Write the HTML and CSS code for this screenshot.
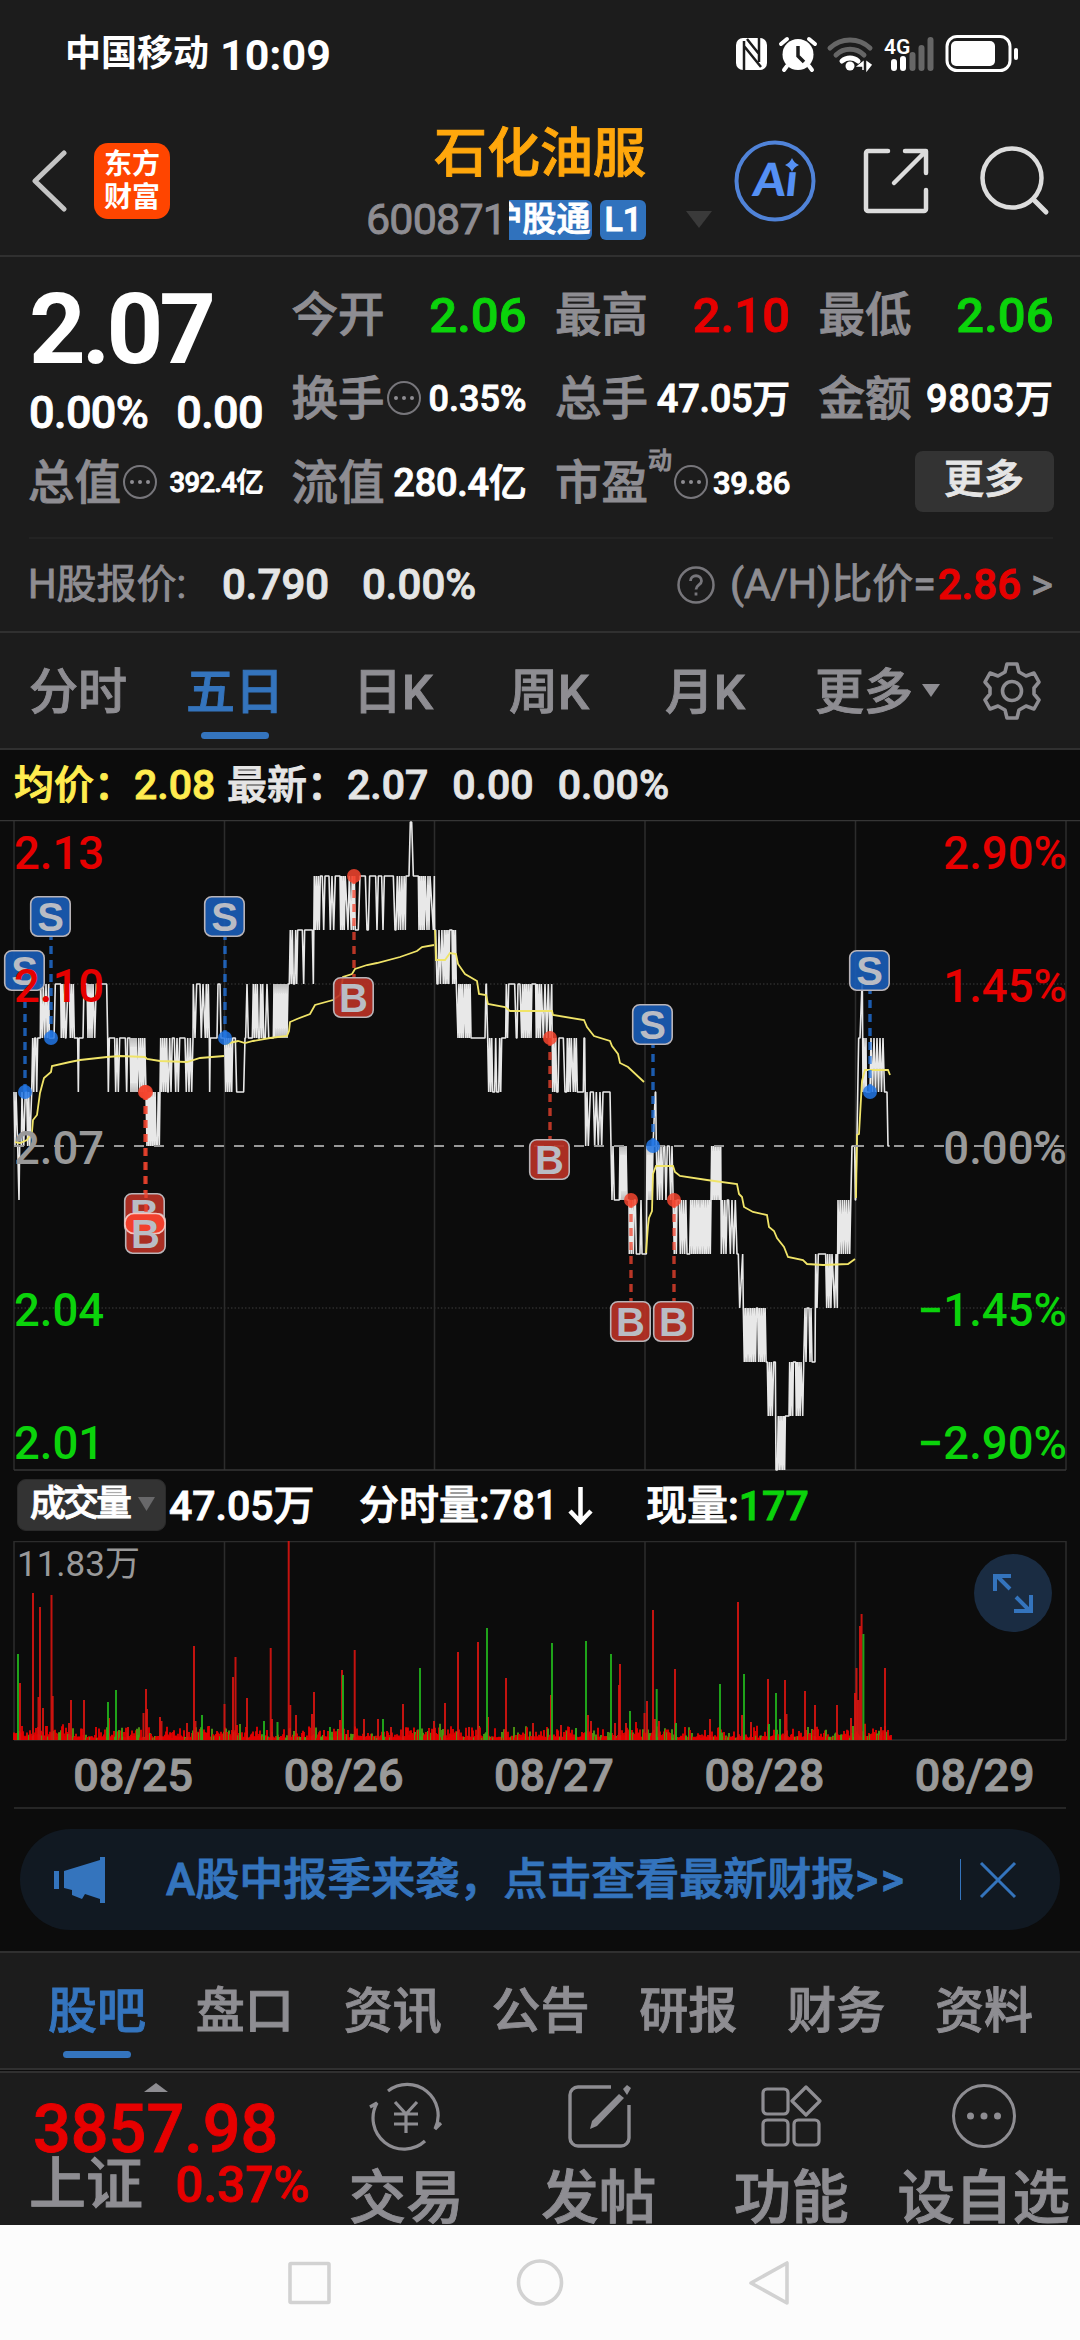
FILE: index.html
```html
<!DOCTYPE html>
<html lang="zh-CN">
<head>
  <meta charset="UTF-8">
  <meta name="viewport" content="width=device-width, initial-scale=1.0">
  <title>石化油服 600871</title>
  <link rel="stylesheet" href="styles.css">
</head>
<body>
  <div class="status-bar">
    <span class="carrier">中国移动</span>
    <span class="clock">10:09</span>
    <svg class="status-icons" width="290" height="44" viewBox="0 0 290 44">
      <rect x="5" y="6" width="31" height="32" rx="7" fill="#fff"/>
      <path d="M13 38V9M13 14l17 21M16 7l12 15M28 5v25" fill="none" stroke="#1c1c1c" stroke-width="2.500"/>
      <circle cx="67" cy="22.500" r="15.500" fill="#fff"/>
      <path d="M50 12l6-5M84 12l-6-5M56 34l-3 4M78 34l3 4" stroke="#fff" stroke-width="4" stroke-linecap="round"/>
      <path d="M67 14v10l6 6" fill="none" stroke="#1c1c1c" stroke-width="3.500"/>
      <path d="M99 16a29 29 0 0 1 40 0" fill="none" stroke="#666" stroke-width="5" stroke-linecap="round"/>
      <path d="M105 23a20 20 0 0 1 28 0" fill="none" stroke="#666" stroke-width="5" stroke-linecap="round"/>
      <path d="M111 29a12 12 0 0 1 16 0" fill="none" stroke="#fff" stroke-width="5" stroke-linecap="round"/>
      <circle cx="119" cy="34" r="4.500" fill="#fff"/>
      <path d="M127 34h5v-4zM132 30v8M136 30v8l4-5z" fill="#fff" stroke="#fff" stroke-width="1.500"/>
      <text class="net-type" x="153" y="22">4G</text>
      <path d="M163 30v6M172 27v9" stroke="#fff" stroke-width="6" stroke-linecap="round"/>
      <path d="M181.500 23v13M190.500 16v20M199.500 8v28" stroke="#666" stroke-width="6" stroke-linecap="round"/>
      <rect x="216" y="4.500" width="63" height="34" rx="10" fill="none" stroke="#fff" stroke-width="3"/>
      <rect x="220" y="9" width="44" height="25" rx="5" fill="#fff"/>
      <path d="M285 18v8" stroke="#fff" stroke-width="4" stroke-linecap="round"/>
    </svg>
  </div>

  <div class="header">
    <svg class="back" width="36" height="62" viewBox="0 0 36 62"><path d="M33 3L4 31l29 28" fill="none" stroke="#c4c4c4" stroke-width="5" stroke-linecap="round" stroke-linejoin="round"/></svg>
    <div class="logo">东方<br>财富</div>
    <div class="stock">
      <div class="stock-name">石化油服</div>
      <div class="stock-code">
        <span>600871</span><span class="tag tag-cut"><i>沪股通</i></span><span class="tag tag-l1">L1</span>
      </div>
    </div>
    <svg class="caret" width="26" height="18" viewBox="0 0 26 18"><path d="M0 0h26L13 17z" fill="#3a3a3a"/></svg>
    <svg class="ai" width="82" height="82" viewBox="0 0 82 82">
      <circle cx="41" cy="41" r="38.500" fill="none" stroke="#5083d8" stroke-width="4"/>
      <path d="M58 18q2 5 7 7-5 2-7 7-2-5-7-7 5-2 7-7z" fill="#5590f4"/>
      <text class="ai-text" x="18" y="56">Aı</text>
    </svg>
    <svg class="share" width="66" height="66" viewBox="0 0 66 66"><path d="M25 3H5a2 2 0 0 0-2 2v56a2 2 0 0 0 2 2h56a2 2 0 0 0 2-2V42M42 3h21v22M31 35L62 4" fill="none" stroke="#dcdcdc" stroke-width="4.500" stroke-linecap="round" stroke-linejoin="round"/></svg>
    <svg class="search" width="70" height="70" viewBox="0 0 70 70"><circle cx="32" cy="32" r="29.500" fill="none" stroke="#dcdcdc" stroke-width="4.500"/><path d="M54 54l12 12" stroke="#dcdcdc" stroke-width="5" stroke-linecap="round"/></svg>
  </div>

  <div class="quote">
    <div class="quote-grid">
      <div class="price">2.07</div>
      <div class="cell"><label>今开</label><b class="v-lg down">2.06</b></div>
      <div class="cell"><label>最高</label><b class="v-lg up">2.10</b></div>
      <div class="cell"><label>最低</label><b class="v-lg down">2.06</b></div>

      <div class="change"><span>0.00%</span><span>0.00</span></div>
      <div class="cell"><label>换手</label><i class="dots"></i><b class="v-sm">0.35%</b></div>
      <div class="cell"><label>总手</label><b class="v-md">47.05万</b></div>
      <div class="cell"><label>金额</label><b class="v-md v-amount">9803万</b></div>

      <div class="cell"><label>总值</label><i class="dots"></i><b class="v-xs">392.4亿</b></div>
      <div class="cell"><label>流值</label><b class="v-md">280.4亿</b></div>
      <div class="cell"><label>市盈</label><sup>动</sup><i class="dots"></i><b class="v-pe">39.86</b></div>
      <div class="cell"><button class="more">更多</button></div>
    </div>
    <div class="h-share">
      <span class="h-label">H股报价:</span>
      <span class="h-price">0.790</span>
      <span class="h-pct">0.00%</span>
      <svg class="help" width="40" height="40" viewBox="0 0 40 40"><circle cx="20" cy="20" r="17.500" fill="none" stroke="#77767b" stroke-width="2.500"/><path d="M14.500 16c0-7 11-7 11 0 0 4-5.500 4-5.500 8.500M20 27.500v3" fill="none" stroke="#77767b" stroke-width="2.800"/></svg>
      <span class="ah">(A/H)比价=</span><span class="ah-value up">2.86</span><span class="ah-arrow">&gt;</span>
    </div>
  </div>

  <div class="period-tabs">
    <span>分时</span>
    <span class="active">五日</span>
    <span>日K</span>
    <span>周K</span>
    <span>月K</span>
    <span class="period-more">更多<svg width="18" height="13" viewBox="0 0 18 13"><path d="M0 0h18L9 13z" fill="#8e8d92"/></svg></span>
    <svg class="gear" width="58" height="60" viewBox="0 0 58 60">
      <path d="M24 3h10l2 8 7 4 8-3 5 9-5 6v6l5 6-5 9-8-3-7 4-2 8H24l-2-8-7-4-8 3-5-9 5-6v-6l-5-6 5-9 8 3 7-4z" fill="none" stroke="#8e8d92" stroke-width="3.600" stroke-linejoin="round"/>
      <circle cx="29" cy="30" r="9.500" fill="none" stroke="#8e8d92" stroke-width="3.600"/>
    </svg>
  </div>

  <div class="avg-line">
    <span class="avg">均价：<b>2.08</b></span>
    <span class="last">最新：<b>2.07</b><b>0.00</b><b>0.00%</b></span>
  </div>

  <svg class="chart" width="1080" height="651" viewBox="0 820 1080 651">
    <g id="grid"></g>
    <g id="series"></g>
    <g id="marks"></g>
    <g class="axis">
      <text class="up" x="14" y="869">2.13</text>
      <text class="up" x="14" y="1002">2.10</text>
      <text class="flat" x="14" y="1164">2.07</text>
      <text class="down" x="14" y="1326">2.04</text>
      <text class="down" x="14" y="1459">2.01</text>
    </g>
    <g class="axis axis-right">
      <text class="up" x="1067" y="869">2.90%</text>
      <text class="up" x="1067" y="1002">1.45%</text>
      <text class="flat" x="1067" y="1164">0.00%</text>
      <text class="down" x="1067" y="1326">−1.45%</text>
      <text class="down" x="1067" y="1459">−2.90%</text>
    </g>
  </svg>

  <div class="vol-head">
    <button class="vol-type">成交量<svg width="17" height="14" viewBox="0 0 17 14"><path d="M0 0h17L8.500 14z" fill="#68686a"/></svg></button>
    <span class="vol-total">47.05万</span>
    <span class="vol-min">分时量:781<svg width="25" height="38" viewBox="0 0 25 38"><path d="M12.500 0v34M2 24l10.500 11L23 24" fill="none" stroke="#fff" stroke-width="4.500"/></svg></span>
    <span class="vol-now">现量:<em class="down">177</em></span>
  </div>

  <svg class="volume" width="1080" height="200" viewBox="0 1541 1080 200">
    <g id="bars"></g>
    <text class="vol-max" x="17" y="1576">11.83万</text>
    <circle cx="1013" cy="1593" r="39" fill="#1a2c42"/>
    <path d="M1010 1589l-13-13M995 1591v-15h16M1016 1597l13 13M1014 1611h17v-16" fill="none" stroke="#3474bd" stroke-width="4"/>
  </svg>

  <div class="dates">
    <span>08/25</span><span>08/26</span><span>08/27</span><span>08/28</span><span>08/29</span>
  </div>

  <div class="notice-wrap">
    <div class="notice">
      <svg width="52" height="46" viewBox="0 0 52 46"><path d="M0 14h5v18H0zM10 14L46 3V0h5v46h-5v-4L31 37l-3 5-10-4v-5l-8-2z" fill="#3474bd"/></svg>
      <span class="notice-text">A股中报季来袭，点击查看最新财报<em>&gt;&gt;</em></span>
      <span class="notice-line"></span>
      <svg class="close" width="38" height="38" viewBox="0 0 38 38"><path d="M2 2l34 34M36 2L2 36" stroke="#3474bd" stroke-width="3"/></svg>
    </div>
  </div>

  <div class="info-tabs">
    <span class="active">股吧</span>
    <span>盘口</span>
    <span>资讯</span>
    <span>公告</span>
    <span>研报</span>
    <span>财务</span>
    <span>资料</span>
  </div>

  <div class="toolbar">
    <div class="index">
      <svg class="index-caret" width="24" height="9" viewBox="0 0 24 9"><path d="M0 9h24L12 0z" fill="#8e8d92"/></svg>
      <div class="index-value">3857.98</div>
      <div class="index-row"><span>上证</span><em>0.37%</em></div>
    </div>
    <div class="tool">
      <svg width="74" height="70" viewBox="0 0 74 70"><path d="M19 10a31 31 0 0 1 47 38l6-6M56 60A31 31 0 0 1 8 22l-7 4M26 21l11 12 11-12M37 33v19M25 33h24M25 43h24" fill="none" stroke="#8e8d92" stroke-width="3.200" stroke-linejoin="bevel"/></svg>
      <span>交易</span>
    </div>
    <div class="tool">
      <svg width="66" height="66" viewBox="0 0 66 66"><path d="M45 4H12a8 8 0 0 0-8 8v43a8 8 0 0 0 8 8h43a8 8 0 0 0 8-8V22" fill="none" stroke="#8e8d92" stroke-width="3.400"/><path d="M57 6l4-4 4 3-4 7zM53 11l5 4-27 28-7 3 2-8z" fill="#8e8d92"/></svg>
      <span>发帖</span>
    </div>
    <div class="tool">
      <svg width="62" height="64" viewBox="0 0 62 64"><g fill="none" stroke="#8e8d92" stroke-width="3.200"><rect x="3" y="5" width="25" height="25" rx="4"/><rect x="3" y="36" width="25" height="25" rx="4"/><rect x="34" y="36" width="25" height="25" rx="4"/><path d="M46 3l14 14-14 14-14-14z" stroke-linejoin="round"/></g></svg>
      <span>功能</span>
    </div>
    <div class="tool">
      <svg width="66" height="66" viewBox="0 0 66 66"><circle cx="33" cy="33" r="30.500" fill="none" stroke="#8e8d92" stroke-width="3"/><g fill="#8e8d92"><circle cx="19.500" cy="33" r="3.500"/><circle cx="33" cy="33" r="3.500"/><circle cx="46.500" cy="33" r="3.500"/></g></svg>
      <span>设自选</span>
    </div>
  </div>

  <div class="nav-bar">
    <svg width="1080" height="116" viewBox="0 0 1080 116">
      <g fill="none" stroke="#d2d2d2" stroke-width="3.600" stroke-linejoin="round">
        <rect x="290" y="38.500" width="39" height="39" rx="1"/>
        <circle cx="540" cy="57.500" r="21.500"/>
        <path d="M787 38v40l-36-20z"/>
      </g>
    </svg>
  </div>

  <script src="chart.js"></script>
</body>
</html>
```
FILE: styles.css
```css
* {
  box-sizing: border-box;
}

body {
  margin: 0;
  width: 1080px;
  height: 2340px;
  overflow: hidden;
  background-color: #0c0c0c;
  color: #fff;
  font-family: Roboto, "Noto Sans CJK SC", sans-serif;
  font-weight: 500;
  line-height: 1;
  white-space: nowrap;
  -webkit-text-stroke: 0.9px;
}

i, em {
  font-style: normal;
}

svg {
  display: block;
  flex: none;
}

.up {
  color: #e60000;
  fill: #e60000;
}

.down {
  color: #0bd30b;
  fill: #0bd30b;
}

.flat {
  color: #999;
  fill: #999;
}

/* status bar */
.status-bar {
  display: flex;
  align-items: center;
  height: 108px;
  padding: 0 59px 0 65px;
  background-color: #1c1c1c;
  font-weight: 700;
  -webkit-text-stroke: 0;
}

.carrier {
  font-size: 36px;
}

.clock {
  margin: 2px 0 0 11px;
  font-size: 43px;
}

.status-icons {
  margin-left: auto;
}

.net-type {
  font-size: 21px;
  font-weight: 600;
  fill: #fff;
}

/* header */
.header {
  display: flex;
  height: 149px;
  padding-left: 31px;
  background-color: #1c1c1c;
  border-bottom: 2px solid #303030;
}

.back {
  margin-top: 42px;
}

.logo {
  width: 76px;
  height: 76px;
  margin: 35px 0 0 27px;
  padding: 5px 0;
  border-radius: 14px;
  background-color: #ff4500;
  text-align: center;
  font-size: 28px;
  font-weight: 700;
  line-height: 33px;
  -webkit-text-stroke: 0;
}

.stock {
  width: 280px;
  margin-left: 196px;
  text-align: right;
}

.stock-name {
  margin-top: 18px;
  font-size: 53px;
  line-height: 56px;
  color: #ffa70c;
}

.stock-code {
  display: flex;
  justify-content: flex-end;
  margin-top: 17px;
  font-size: 43px;
  line-height: 41px;
  font-weight: 400;
  color: #8e8d92;
  letter-spacing: -0.800px;
}

.tag {
  height: 40px;
  margin-top: 1px;
  border-radius: 6px;
  background-color: #3072bd;
  color: #fff;
  font-size: 34px;
  font-weight: 500;
  line-height: 38px;
  letter-spacing: 0;
}

.tag-cut {
  display: flex;
  justify-content: flex-end;
  width: 84px;
  margin-left: 3px;
  padding-right: 2px;
  border-radius: 0 6px 6px 0;
  overflow: hidden;
}

.tag-l1 {
  width: 46px;
  margin-left: 8px;
  text-align: center;
}

.caret {
  margin: 103px 0 0 40px;
}

.ai {
  margin: 32px 0 0 22px;
}

.ai-text {
  font-family: Lato, sans-serif;
  font-size: 46px;
  font-weight: 900;
  fill: #5590f4;
  color: #5590f4;
  -webkit-text-stroke: 1.500px;
  transform: skewX(-6deg);
  transform-origin: 41px 56px;
}

.share {
  margin: 40px 0 0 47px;
}

.search {
  margin: 38px 0 0 51px;
}

/* quote */
.quote {
  height: 376px;
  padding: 16px 27px 0 29px;
  background-color: #1c1c1c;
  border-bottom: 2px solid #303030;
}

.quote-grid {
  display: grid;
  grid-template-columns: repeat(4, 234px);
  grid-template-rows: repeat(3, 84px);
  column-gap: 29.500px;
}

.price {
  font-size: 99px;
  font-weight: 700;
  line-height: 113px;
  letter-spacing: -4px;
  -webkit-text-stroke: 0;
}

.change {
  display: flex;
  justify-content: space-between;
  font-size: 45px;
  line-height: 111px;
  letter-spacing: -0.600px;
}

.cell {
  display: flex;
  align-items: center;
}

.cell label {
  margin-left: -1px;
  font-size: 46.500px;
  color: #8e8d92;
}

.cell b {
  margin-left: auto;
  font-weight: 500;
}

.cell .v-lg {
  font-size: 49px;
}

.cell .v-md {
  font-size: 38px;
  letter-spacing: -0.300px;
}

.cell .v-amount {
  letter-spacing: 0.600px;
}

.cell .v-sm {
  font-size: 36px;
}

.cell .v-xs {
  font-size: 27.500px;
  letter-spacing: -0.700px;
}

.cell .v-pe {
  font-size: 31px;
  letter-spacing: -0.400px;
}

.cell sup {
  align-self: flex-start;
  margin-top: 8px;
  font-size: 24px;
  line-height: 24px;
  color: #8e8d92;
}

.dots {
  display: flex;
  align-items: center;
  justify-content: center;
  width: 34px;
  height: 34px;
  margin: -2px 0 0 2px;
  border: 2.500px solid #77767b;
  border-radius: 50%;
}

.dots::before {
  content: "";
  width: 4px;
  height: 4px;
  border-radius: 50%;
  background-color: #8e8d92;
  box-shadow: -8px 0 #8e8d92, 8px 0 #8e8d92;
}

.more {
  width: 139px;
  height: 61px;
  margin: -3px 0 0 auto;
  padding: 0 0 3px;
  border: none;
  border-radius: 8px;
  background-color: #333;
  color: #e5e5e5;
  font: inherit;
  font-size: 40px;
}

.h-share {
  display: flex;
  align-items: center;
  height: 93px;
  margin-top: 12px;
  border-top: 2px solid #232323;
  font-size: 42px;
  color: #e5e5e5;
}

.h-label {
  width: 194px;
  margin-left: -1px;
  font-size: 40px;
  font-weight: 400;
  color: #8e8d92;
}

.h-price {
  width: 140px;
}

.help {
  margin-left: auto;
}

.ah {
  margin-left: 14px;
  font-size: 41px;
  font-weight: 400;
  color: #8e8d92;
}

.ah-value {
  margin-left: 2px;
}

.ah-arrow {
  margin-left: 10px;
  font-size: 42px;
  font-weight: 400;
  color: #8e8d92;
}

/* period tabs */
.period-tabs {
  display: flex;
  align-items: center;
  height: 117px;
  padding: 4px 0 0 29px;
  background-color: #1c1c1c;
  border-bottom: 2px solid #303030;
  font-size: 49px;
  color: #8e8d92;
}

.period-tabs span {
  position: relative;
  margin-right: 76px;
}

.period-tabs .active {
  margin: 0 69px 0 -17px;
}

.period-tabs .active,
.info-tabs .active {
  color: #3474bd;
}

.active::after {
  content: "";
  position: absolute;
  left: 50%;
  bottom: -22px;
  width: 68px;
  height: 7px;
  margin-left: -34px;
  border-radius: 4px;
  background-color: #3474bd;
}

.period-tabs .period-more {
  display: flex;
  align-items: center;
  margin: 0 43px 0 -6px;
}

.period-more svg {
  margin: -4px 0 0 9px;
}

.gear {
  margin-top: -4px;
}

/* average / last line */
.avg-line {
  display: flex;
  align-items: center;
  height: 70px;
  padding-left: 14px;
  font-size: 40px;
  color: #e5e5e5;
}

.avg-line b {
  font-weight: 500;
  font-size: 41px;
}

.avg {
  width: 213px;
  color: #ffec4f;
}

.last b + b {
  margin-left: 24px;
}

/* chart */
.axis {
  font-size: 45.500px;
  font-weight: 500;
}

.axis-right {
  text-anchor: end;
}

.mark {
  font-family: "Liberation Sans", sans-serif;
  font-size: 40px;
  font-weight: 700;
  text-anchor: middle;
  fill: #b9bcc4;
  -webkit-text-stroke: 0;
}

/* volume */
.vol-head {
  display: flex;
  align-items: center;
  height: 70px;
  padding-left: 17px;
  font-size: 41px;
}

.vol-type {
  display: flex;
  align-items: center;
  justify-content: space-between;
  width: 149px;
  height: 52px;
  margin-top: -2px;
  padding: 0 10px 3px 12px;
  border: 1px solid #2a2a2a;
  border-radius: 9px;
  background-color: #333;
  color: #fff;
  font: inherit;
  font-size: 36px;
  letter-spacing: -3px;
}

.vol-total {
  width: 190px;
  margin-left: 3px;
}

.vol-min {
  display: flex;
  align-items: center;
  width: 287px;
  font-size: 40px;
}

.vol-min svg {
  margin-left: 10px;
}

.vol-max {
  font-size: 35px;
  font-weight: 400;
  color: #999;
  fill: #999;
  -webkit-text-stroke: 0.500px;
}

.dates {
  display: flex;
  height: 68px;
  margin: 0 14px;
  padding-left: 14px;
  border-bottom: 2px solid #262626;
  font-size: 45px;
  line-height: 69px;
  color: #999;
}

.dates span {
  flex: none;
  width: 210.400px;
  text-align: center;
}

/* notice */
.notice-wrap {
  height: 142px;
  padding: 20px 20px 0;
}

.notice {
  display: flex;
  align-items: center;
  height: 101px;
  padding-left: 34px;
  border-radius: 51px;
  background-color: #111922;
  color: #3474bd;
}

.notice-text {
  width: 794px;
  margin-left: 60px;
  font-size: 44px;
}

.notice-text em {
  letter-spacing: 3px;
}

.notice-line {
  width: 1px;
  height: 41px;
  background-color: #3474bd;
}

.close {
  margin-left: 18px;
}

/* info tabs */
.info-tabs {
  display: flex;
  align-items: center;
  justify-content: space-between;
  height: 119px;
  padding: 2px 47px 0 48px;
  background-color: #1c1c1c;
  border-top: 2px solid #303030;
  border-bottom: 2px solid #303030;
  font-size: 49px;
  color: #8e8d92;
}

.info-tabs span {
  position: relative;
}

/* bottom toolbar */
.toolbar {
  display: flex;
  height: 154px;
  margin-top: 1px;
  padding-left: 30px;
  overflow: hidden;
  background-color: #1c1c1c;
  border-top: 2px solid #303030;
  color: #8e8d92;
}

.index {
  width: 280px;
}

.index-caret {
  margin: 10px 0 0 114px;
}

.index-value {
  margin: 11px 0 0 3px;
  font-size: 66.500px;
  line-height: 52px;
  color: #e60000;
}

.index-row {
  display: flex;
  align-items: center;
  justify-content: space-between;
  margin: 2px 0 0 -1px;
  font-size: 57px;
  line-height: 56px;
}

.index-row em {
  font-size: 49.500px;
  color: #e60000;
}

.tool {
  display: flex;
  flex-direction: column;
  align-items: center;
  width: 192.500px;
  padding-top: 8px;
}

.tool svg {
  height: 70px;
}

.tool span {
  margin-top: 19px;
  font-size: 57.500px;
}

.nav-bar {
  height: 116px;
  background-color: #fcfcfc;
}
```
FILE: chart.js
```js
var NS = "http://www.w3.org/2000/svg";

function add(parent, name, attrs, text) {
  var el = document.createElementNS(NS, name);
  for (var key in attrs) el.setAttribute(key, attrs[key]);
  if (text) el.textContent = text;
  document.getElementById(parent).appendChild(el);
}

// price level in cents above 2.07 -> y
function levelY(level) {
  return 1146 - level * 54;
}

// grid
var columns = [14, 224.5, 434.5, 645, 855.5, 1066];
columns.forEach(function (x) {
  add("grid", "path", { d: "M" + x + " 821V1470", stroke: "#2c2c2c", "stroke-width": 1.5 });
  add("bars", "path", { d: "M" + x + " 1541V1740", stroke: "#2c2c2c", "stroke-width": 1.5 });
});
add("grid", "path", { d: "M0 820.500H1080M14 1470H1066", stroke: "#363636", "stroke-width": 1.5 });
add("grid", "path", { d: "M14 984H1066M14 1308H1066", stroke: "#2c2c2c", "stroke-width": 1.5, "stroke-dasharray": "1.5 2" });
add("bars", "path", { d: "M14 1541.500H1066M14 1740H1066", stroke: "#2c2c2c", "stroke-width": 1.5 });

// blocks: x from, x to (1/3 px), level a, level b, zigzag step
var first = [
  [42, 48, 1, 0, 3], [48, 54, 1, 0, 5], [57, 57, -1, -1, 1], [59, 64, 0, 0, 1], [66, 76, 1, 0, 5], [80, 91, 1, 0, 3], [95, 97, 1, 0, 3],
  [98, 104, 2, 1, 3], [107, 114, 2, 1, 3], [115, 121, 2, 2, 1], [122, 128, 3, 2, 5], [130, 146, 3, 2, 4], [148, 158, 2, 2, 1], [162, 168, 2, 3, 4],
  [170, 182, 3, 3, 1], [184, 196, 2, 3, 3], [198, 206, 2, 3, 6], [208, 221, 3, 2, 3], [223, 233, 2, 2, 1], [235, 235, 1, 1, 1], [237, 249, 2, 2, 1],
  [252, 261, 3, 3, 1], [264, 279, 2, 3, 3], [284, 293, 2, 3, 5], [294, 320, 3, 3, 1], [323, 323, 2, 2, 1], [325, 325, 1, 1, 1], [328, 344, 2, 2, 1],
  [347, 359, 1, 2, 4], [361, 376, 2, 2, 1], [380, 380, 1, 1, 1], [383, 390, 2, 2, 1], [393, 413, 1, 2, 3], [416, 436, 2, 1, 3],
  [438, 438, 1, 1, 1], [441, 468, 0, 1, 2.7], [472, 480, 0, 1, 3], [482, 503, 2, 1, 3], [505, 520, 1, 2, 4], [523, 542, 2, 1, 4], [543, 555, 2, 2, 1],
  [559, 579, 1, 2, 4], [580, 588, 3, 2, 5], [590, 600, 3, 3, 1], [604, 612, 2, 3, 5], [616, 628, 2, 3, 3], [629, 629, 1, 1, 1], [631, 651, 2, 2, 1],
  [654, 660, 3, 3, 1], [663, 674, 2, 2, 1],
  [677, 698, 1, 2, 3], [700, 706, 2, 2, 1], [710, 731, 1, 1, 1], [735, 737, 2, 2, 1], [741, 741, 3, 3, 1], [745, 757, 2, 2, 1],
  [760, 776, 3, 2, 3], [779, 792, 2, 3, 3], [796, 808, 2, 3, 5], [809, 820, 2, 2, 1], [822, 846, 3, 2, 3], [849, 866, 2, 3, 3],
  [868, 881, 3, 4, 3], [884, 894, 3, 4, 3], [896, 907, 4, 4, 1], [911, 911, 3, 3, 1], [914, 937, 4, 4, 1], [940, 940, 3, 3, 1],
  [943, 963, 5, 4, 3], [967, 976, 5, 4, 4], [979, 987, 5, 5, 1], [991, 991, 4, 4, 1], [996, 1006, 5, 4, 5], [1008, 1020, 5, 5, 1],
  [1022, 1038, 4, 5, 2.7], [1044, 1048, 4, 5, 4], [1054, 1066, 4, 5, 3], [1075, 1077, 4, 5, 3], [1080, 1096, 5, 5, 1], [1101, 1105, 4, 4, 1],
  [1109, 1127, 5, 5, 1], [1131, 1131, 4, 4, 1], [1135, 1145, 5, 5, 1], [1149, 1149, 4, 4, 1], [1153, 1180, 5, 5, 1], [1185, 1188, 4, 4, 1],
  [1192, 1216, 5, 4, 3.4], [1218, 1227, 5, 5, 1], [1231, 1235, 6, 6, 1], [1240, 1255, 5, 5, 1], [1257, 1276, 4, 5, 2.7], [1281, 1292, 4, 5, 3], [1300, 1300, 4, 4, 1], [1303, 1303, 5, 5, 1]
];
var second = [
  [14, 17, 4, 4, 1], [21, 24, 3, 3, 1], [27, 40, 4, 3, 4.3], [43, 57, 4, 3, 2.7], [59, 66, 4, 4, 1], [68, 81, 3, 4, 2.7],
  [84, 101, 2, 3, 2.7], [104, 123, 3, 2, 2.7], [125, 165, 2, 2, 1], [168, 169, 3, 3, 1], [173, 173, 2, 2, 1], [176, 190, 1, 2, 3],
  [194, 202, 1, 2, 3], [206, 217, 1, 2, 3], [219, 227, 2, 2, 1], [229, 239, 3, 2, 3.5], [241, 254, 3, 3, 1], [259, 261, 2, 2, 1], [264, 270, 3, 3, 1],
  [275, 306, 2, 3, 2.8], [308, 317, 3, 3, 1], [319, 335, 2, 3, 3], [340, 365, 2, 3, 5],
  [368, 378, 1, 2, 3], [380, 384, 1, 1, 1], [387, 400, 2, 2, 1], [405, 410, 1, 1, 1], [412, 426, 2, 1, 3], [430, 440, 1, 2, 3], [442, 460, 1, 1, 1],
  [462, 464, 2, 2, 1], [467, 477, 0, 1, 4], [481, 490, 1, 1, 1], [494, 500, 0, 1, 5], [505, 516, 0, 1, 5], [519, 540, 1, 1, 1],
  [543, 551, 0, -1, 3], [553, 568, -1, -1, 1], [570, 593, 0, -1, 3], [595, 597, -1, -1, 1], [598, 610, -2, -1, 3], [613, 616, -1, -1, 1],
  [619, 630, -2, -2, 1], [633, 633, -1, -1, 1], [636, 649, -2, -2, 1],
  [651, 660, 0, -1, 3], [663, 671, 0, -1, 3], [676, 677, 1, 1, 1], [679, 700, 0, -1, 3.5], [704, 714, 0, -1, 4], [718, 728, 0, -1, 4],
  [733, 739, -2, -1, 3], [741, 748, -1, -1, 1], [751, 770, -2, -1, 3.3], [771, 779, -2, -2, 1], [782, 841, -1, -2, 2.8], [845, 873, 0, -1, 2.7],
  [874, 893, -2, -1, 3.5], [896, 923, -1, -2, 5], [925, 931, -2, -3, 4], [938, 938, -2, -2, 1], [940, 981, -3, -4, 2.8], [983, 1009, -3, -4, 2.8],
  [1012, 1028, -4, -5, 3], [1031, 1036, -4, -4, 1], [1038, 1042, -6, -6, 1], [1045, 1064, -5, -6, 2.7], [1066, 1077, -5, -5, 1],
  [1079, 1088, -4, -5, 3], [1090, 1097, -4, -4, 1], [1099, 1114, -5, -4, 2.8], [1118, 1122, -5, -4, 3], [1125, 1133, -3, -4, 3], [1137, 1146, -3, -4, 3],
  [1148, 1155, -4, -4, 1], [1157, 1167, -2, -3, 4], [1169, 1187, -2, -2, 1], [1190, 1209, -3, -2, 3.2], [1214, 1222, -3, -2, 4],
  [1224, 1263, -1, -2, 3.2], [1266, 1274, 0, 0, 1], [1276, 1277, -1, -1, 1], [1281, 1281, 0.2, 0.2, 1], [1286, 1290, 2, 2, 1],
  [1296, 1297, 3, 3, 1], [1299, 1308, 1, 2, 3], [1309, 1320, 1, 1, 1], [1323, 1365, 2, 1, 4.5], [1368, 1368, 1, 1, 1], [1371, 1371, 1, 1, 1], [1374, 1379, 0, 0, 1]
];

function blocksToPoints(blocks, offset) {
  var points = [];
  blocks.forEach(function (b) {
    if (b[2] === b[3]) {
      points.push((offset + b[0] / 3) + " " + levelY(b[2]));
      points.push((offset + b[1] / 3) + " " + levelY(b[2]));
      return;
    }
    var high = true;
    for (var x = b[0]; x <= b[1]; x += b[4]) {
      points.push((offset + x / 3).toFixed(1) + " " + levelY(high ? b[2] : b[3]));
      high = !high;
    }
  });
  return points;
}

var price = blocksToPoints(first, 0).concat(blocksToPoints(second, 430));
add("series", "path", { d: "M" + price.join("L"), fill: "none", stroke: "#e8e8e8", "stroke-width": 1.6, "stroke-linejoin": "bevel" });

// average price, one line per session
[
  "15 1142L20 1143L27 1140L32 1132L33 1120L37 1115L40 1093L44 1078L51 1072L52 1066L70 1062L80 1060L107 1057L120 1056L145 1057L147 1059L160 1061L187 1062L200 1058L224 1056",
  "225 1044L238 1041L245 1043L253 1041L270 1038L287 1036L289 1031L290 1022L297 1019L310 1014L315 1005L333 1000L340 995L343 977L352 974L355 969L367 965L377 963L400 957L417 951L422 947L434 945",
  "435 930L436 960L445 960L450 953L456 954L458 964L465 974L477 981L479 994L486 995L488 1004L505 1007L510 1011L552 1011L553 1015L584 1020L587 1027L594 1036L610 1041L612 1046L618 1054L620 1063L628 1067L644 1082",
  "646 1253L648 1226L649 1218L652 1211L653 1174L656 1166L673 1166L675 1172L680 1176L707 1180L737 1184L739 1194L742 1197L744 1207L753 1212L767 1215L769 1227L774 1231L777 1238L784 1247L788 1257L803 1260L807 1264L823 1265L848 1264L855 1259",
  "856 1198L857 1135L859 1134L862 1081L865 1070L888 1070L890 1075"
].forEach(function (d) {
  add("series", "path", { d: "M" + d, fill: "none", stroke: "#f0e468", "stroke-width": 1.8 });
});
add("series", "path", { d: "M14 1146H1066", stroke: "#999", "stroke-width": 1.8, "stroke-dasharray": "10 10" });

// trade marks: type, badge x, badge y, point x, point y
[
  ["S", 4, 950, 25, 1092], ["S", 30, 896, 51, 1038], ["S", 204, 896, 225, 1038],
  ["B", 124, 1193, 145, 1092], ["B", 125, 1213, 146, 1092], ["B", 333, 977, 354, 876],
  ["B", 529, 1139, 550, 1038], ["B", 610, 1301, 631, 1200], ["B", 653, 1301, 674, 1200],
  ["S", 632, 1004, 653, 1146], ["S", 849, 950, 870, 1092]
].forEach(function (m) {
  var sell = m[0] === "S";
  var color = sell ? "#2277e6" : "#f4452f";
  var from = sell ? m[2] + 41 : m[2];
  add("marks", "path", { d: "M" + m[3] + " " + m[4] + "V" + from, stroke: color, "stroke-width": 3.4, "stroke-dasharray": "8 6", opacity: 0.75 });
  add("marks", "circle", { cx: m[3], cy: m[4], r: 7, fill: color, opacity: 0.85 });
  add("marks", "rect", { x: m[1] + 0.7, y: m[2] + 0.7, width: 39.5, height: 39.5, rx: 7, fill: sell ? "#1a5cb5" : "#b83226", "fill-opacity": 0.92, stroke: "#b9b4b8", "stroke-width": 1.6 });
  // brighter strip where the two buys overlap
  if (m[1] === 125) {
    add("marks", "rect", { x: 125, y: 1213.5, width: 40, height: 20, rx: 9, fill: "#f2402d", stroke: "#f6c3bd", "stroke-width": 1.5 });
  }
  add("marks", "text", { "class": "mark", x: m[1] + 20.5, y: m[2] + 35 }, m[0]);
});

// volume: small background bars, then the tall ones
var seed = 7;
function random() {
  seed = (seed * 16807) % 2147483647;
  return seed / 2147483647;
}
function bar(x, h, color) {
  add("bars", "path", { d: "M" + x + " 1740V" + (1740 - h), stroke: color, "stroke-width": 2, opacity: 0.9 });
}
for (var x = 14; x < 892; x += 1) {
  var near = Math.min(Math.abs(x - 40), Math.abs(x - 224), Math.abs(x - 434), Math.abs(x - 645), Math.abs(x - 862));
  var swell = near < 28 ? 6 : 2;
  bar(x, 2 + Math.pow(random(), 4) * 11 + random() * swell, random() < 0.2 ? "#4e9a12" : "#e60000");
}
var red = [
  [20, 57], [33, 147], [38.5, 43], [40, 133], [43, 32], [51.5, 145], [52.7, 44], [69, 17], [71, 40], [84, 40], [109, 22], [128, 13],
  [143.5, 27], [146, 51], [147, 31], [160, 23], [161.5, 19], [187, 17], [194, 94], [195.5, 19], [224.5, 36], [233, 63], [235.5, 83],
  [247, 42], [270.7, 92], [272, 21], [288.7, 200], [290.3, 35], [296, 25], [312, 26], [314, 48], [340, 20], [342, 70], [354.7, 90],
  [364, 21], [378, 21], [391, 13], [403, 36], [434, 19], [445, 37], [458, 88], [469, 13], [478, 98], [488, 23], [506, 62], [533, 17],
  [551, 45], [561, 15], [588, 25], [591, 19], [615, 17], [619, 55], [620, 76], [626, 17], [644.5, 27], [647, 39], [653, 130], [655, 21],
  [659, 19], [675, 71], [710, 21], [738, 138], [742, 25], [751, 18], [768, 61], [785, 60], [786.5, 26], [805, 49], [815, 35], [837, 35],
  [851, 22], [855, 47], [856.5, 72], [858, 40], [860, 114], [861.6, 126], [881, 13], [885, 72]
];
var green = [
  [18, 86], [108, 38], [116, 50], [202, 25], [264, 19], [277.5, 18], [330, 13], [343, 65], [383, 21], [420, 72], [487, 112], [552, 97],
  [576, 12], [586, 99], [611, 86], [630, 29], [656.7, 51], [676, 17], [720, 56], [744, 66], [769, 16], [776, 47], [780, 21], [863.4, 106]
];
red.forEach(function (b) { bar(b[0], b[1], "#d81410"); });
green.forEach(function (b) { bar(b[0], b[1], "#22b41c"); });
```
